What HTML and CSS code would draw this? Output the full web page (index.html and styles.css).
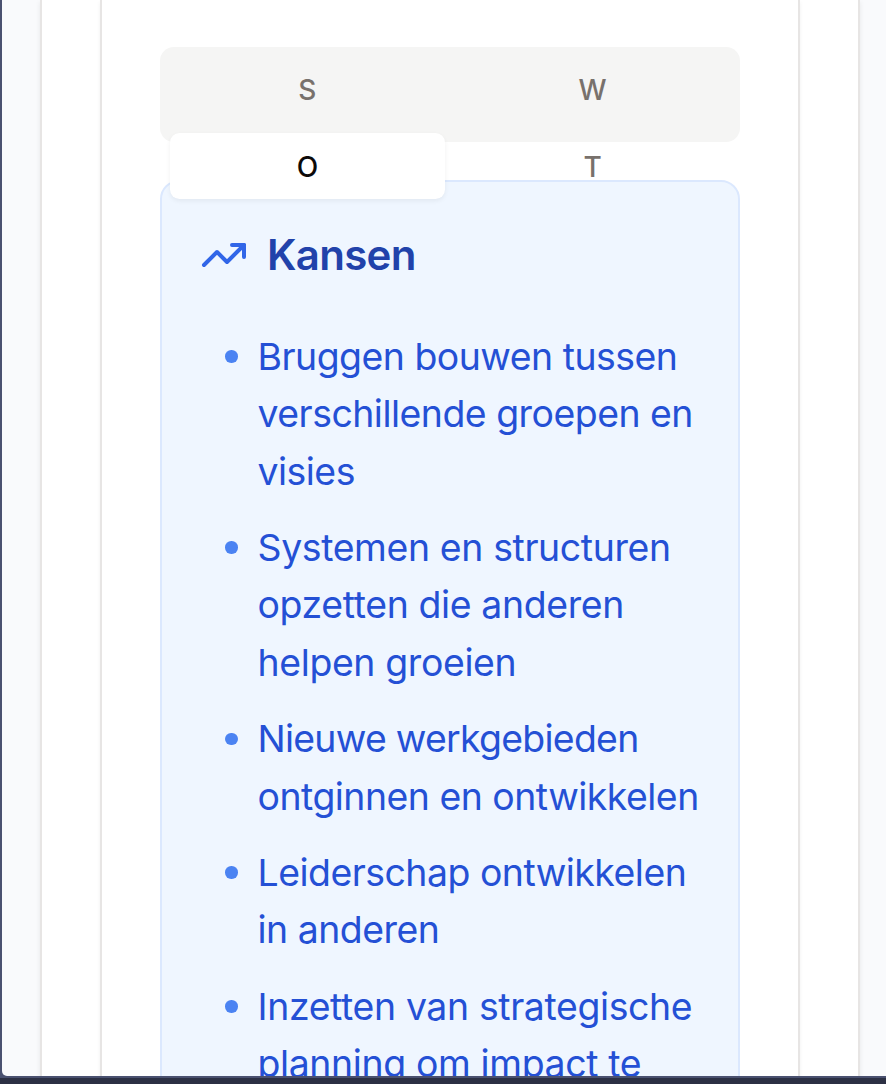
FILE: index.html
```
<!DOCTYPE html>
<html lang="nl">
<head>
<meta charset="utf-8">
<title>SWOT – Kansen</title>
<link rel="stylesheet" href="styles.css">
</head>
<body>
<div class="window">
  <main class="outer-card">
    <section class="inner-card">
      <div class="tabs" role="tablist">
        <button class="tab" role="tab">S</button>
        <button class="tab" role="tab">W</button>
        <button class="tab active" role="tab" aria-selected="true">O</button>
        <button class="tab" role="tab">T</button>
      </div>
      <article class="panel">
        <h2 class="title">
          <svg class="trend" viewBox="0 0 24 24" fill="none" stroke="currentColor" stroke-width="2" stroke-linecap="round" stroke-linejoin="round"><path d="M22 7 13.5 15.5 8.5 10.5 2 17"/><path d="M16 7h6v6"/></svg>
          <span>Kansen</span>
        </h2>
        <ul class="list">
          <li>Bruggen bouwen tussen<br>verschillende groepen en<br>visies</li>
          <li class="loose">Systemen en structuren<br>opzetten die anderen<br>helpen groeien</li>
          <li><span class="tight">Nieuwe werkgebieden</span><br>ontginnen en ontwikkelen</li>
          <li>Leiderschap ontwikkelen<br>in anderen</li>
          <li class="loose">Inzetten van strategische<br>planning om impact te</li>
        </ul>
      </article>
    </section>
  </main>
</div>
</body>
</html>
```
FILE: styles.css
```
* { box-sizing: border-box; }
body {
  margin: 0;
  width: 886px;
  height: 1084px;
  overflow: hidden;
  padding-left: 2px;
  background: linear-gradient(#4a5170 0, #4a5170 1078px, #2c3044 1078px);
  font-family: Inter, "Liberation Sans", sans-serif;
}
.window {
  height: 1076px;
  overflow: hidden;
  padding: 0 26px 0 38px;
  background: #f9fafc;
  border-bottom-left-radius: 5px;
}
.outer-card {
  height: 1090px;
  width: 820px;
  padding: 0 58px;
  background: #fff;
  border: solid #e7e5e4;
  border-width: 0 2px;
  box-shadow: 0 2px 5px rgba(0, 0, 0, .08);
}
.inner-card {
  height: 1090px;
  padding: 46.5px 58px 0;
  border: solid #e7e5e4;
  border-width: 0 2px;
  box-shadow: 0 2px 4px rgba(0, 0, 0, .06);
}
.tabs {
  position: relative;
  z-index: 1;
  display: grid;
  grid-template-columns: 1fr 1fr;
  grid-auto-rows: 66.5px;
  gap: 10px 9.5px;
  height: 95px;
  padding: 9.5px;
  border-radius: 14px;
  background: #f5f5f4;
}
.tab {
  padding: 2px 0 0;
  border: 0;
  border-radius: 9.5px;
  background: none;
  color: #78716c;
  font: 500 28px/64px Inter, "Liberation Sans", sans-serif;
}
.tab.active {
  background: #fff;
  color: #0c0a09;
  box-shadow: 0 2px 5px rgba(0, 0, 0, .06);
}
.panel {
  height: 1000px;
  margin-top: 38.5px;
  padding: 39px 38px 0;
  border: 2px solid #dbe8fe;
  border-radius: 19px;
  background: #eff6ff;
}
.title {
  display: flex;
  align-items: center;
  gap: 19px;
  height: 67px;
  margin: 0;
  color: #2142aa;
  font-size: 42px;
  font-weight: 600;
  letter-spacing: -.7px;
}
.trend { width: 48px; height: 48px; color: #3166e8; }
.list {
  display: grid;
  gap: 19px;
  margin: 39.7px 0 0;
  padding: 0 0 0 57.5px;
  list-style: none;
  color: #2450d5;
  font-size: 37.4px;
  line-height: 57.4px;
  letter-spacing: -.5px;
  white-space: nowrap;
}
.list .loose { letter-spacing: -.36px; }
.list .tight { letter-spacing: -.72px; }
.list li { position: relative; }
.list li::before {
  content: "";
  position: absolute;
  left: -32.5px;
  top: 22.5px;
  width: 12.5px;
  height: 12.5px;
  border-radius: 50%;
  background: #4b83f2;
}
```
